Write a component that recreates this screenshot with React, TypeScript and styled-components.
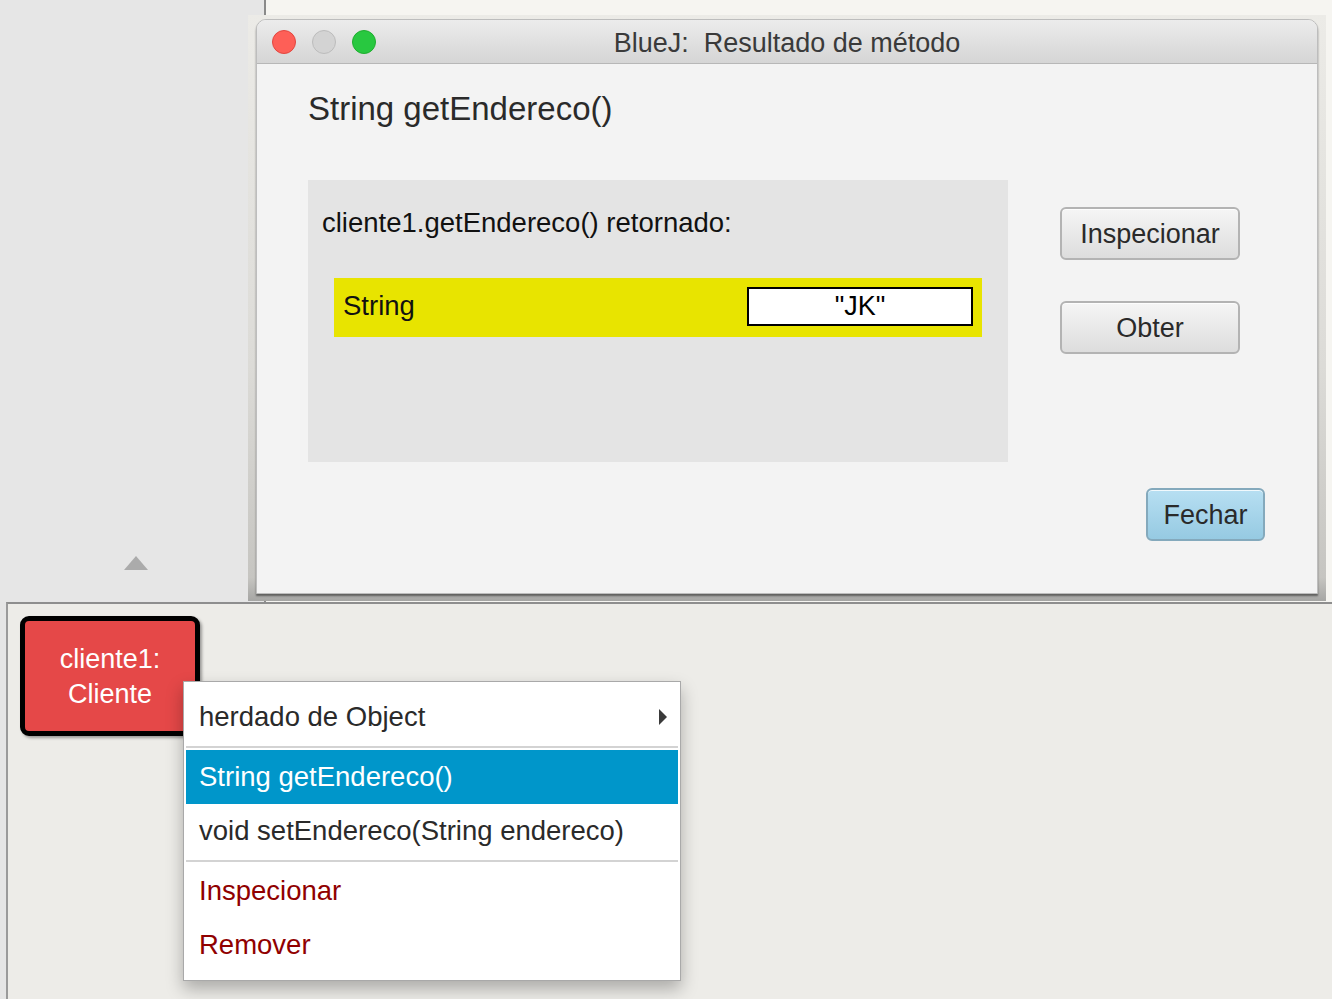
import React from "react";
import styled, { createGlobalStyle } from "styled-components";

const GlobalStyle = createGlobalStyle`
  html, body {
    margin: 0;
    padding: 0;
    width: 1332px;
    height: 999px;
    overflow: hidden;
    font-family: "Liberation Sans", Arial, sans-serif;
  }
  * { box-sizing: border-box; }
`;

const Screen = styled.div`
  position: relative;
  width: 1332px;
  height: 999px;
  display: flex;
  flex-direction: column;
  background: #e5e5e5;
  overflow: hidden;
`;

const TopArea = styled.div`
  display: flex;
  height: 602px;
  flex-shrink: 0;
`;

const SidePane = styled.div`
  width: 264px;
  background: #e6e6e6;
  display: flex;
  flex-direction: column;
  justify-content: flex-end;
  padding: 0 0 32px 124px;
`;

const UpTriangle = styled.div`
  width: 0;
  height: 0;
  border-left: 12px solid transparent;
  border-right: 12px solid transparent;
  border-bottom: 14px solid #ababab;
`;

const Splitter = styled.div`
  width: 2px;
  background: #8a8a8a;
`;

const DesktopPane = styled.div`
  flex: 1;
  background: #f6f5f1;
`;

const Bench = styled.div`
  flex: 1;
  margin-left: 6px;
  border-top: 2px solid #8e8e8e;
  border-left: 2px solid #9a9a9a;
  background: #edece8;
  padding: 12px;
`;

const ObjectCard = styled.div`
  width: 180px;
  height: 120px;
  border: 5px solid #000;
  border-radius: 9px;
  background: #e54848;
  color: #fff;
  font-size: 27px;
  line-height: 35px;
  padding-top: 2px;
  display: flex;
  flex-direction: column;
  align-items: center;
  justify-content: center;
  box-shadow: 2px 2px 3px rgba(0, 0, 0, 0.35);
`;

/* Dialog window (floats over the desktop) */
const DialogFrame = styled.div`
  position: absolute;
  left: 248px;
  top: 15px;
  width: 1078px;
  height: 586px;
  padding: 4px 8px 7px 8px;
  background: linear-gradient(to bottom, #ecebe7 0%, #dcdbd7 60%, #c6c5c1 96%, #a6a6a4 100%);
`;

const Window = styled.div`
  width: 100%;
  height: 100%;
  display: flex;
  flex-direction: column;
  background: #f3f3f3;
  border: 1px solid #bdbdbd;
  border-radius: 10px 10px 0 0;
  overflow: hidden;
  box-shadow: 0 2px 2px rgba(0, 0, 0, 0.45);
`;

const TitleBar = styled.div`
  height: 44px;
  flex-shrink: 0;
  display: grid;
  grid-template-columns: 1fr auto 1fr;
  align-items: center;
  background: linear-gradient(to bottom, #ececec, #d5d5d5);
  border-bottom: 1px solid #b7b7b7;
`;

const Lights = styled.div`
  display: flex;
  gap: 16px;
  padding-left: 15px;
`;

const Light = styled.div<{ $color: string; $edge: string }>`
  width: 24px;
  height: 24px;
  border-radius: 50%;
  background: ${(p) => p.$color};
  border: 1px solid ${(p) => p.$edge};
`;

const Title = styled.div`
  font-size: 27px;
  color: #3a3a3a;
  white-space: pre;
  padding-top: 3px;
`;

const Body = styled.div`
  flex: 1;
  display: flex;
  flex-direction: column;
  padding: 25px 52px 0 51px;
`;

const Heading = styled.div`
  font-size: 33px;
  line-height: 40px;
  color: #2a2a2a;
`;

const ContentRow = styled.div`
  display: flex;
  align-items: flex-start;
  margin-top: 51px;
`;

const ResultPanel = styled.div`
  width: 700px;
  height: 282px;
  background: #e4e4e4;
  padding: 26px 26px 0 14px;
  display: flex;
  flex-direction: column;
`;

const ResultLabel = styled.div`
  font-size: 27.5px;
  line-height: 34px;
  color: #111;
`;

const ValueRow = styled.div`
  margin-top: 38px;
  margin-left: 12px;
  width: 648px;
  height: 59px;
  background: #e8e400;
  display: flex;
  align-items: center;
  justify-content: space-between;
  padding: 0 9px 3px 9px;
  font-size: 27.5px;
  color: #111;
`;

const ValueBox = styled.div`
  width: 226px;
  height: 39px;
  border: 2px solid #000;
  background: #fff;
  display: flex;
  align-items: center;
  justify-content: center;
  font-size: 27px;
  color: #000;
`;

const ButtonColumn = styled.div`
  display: flex;
  flex-direction: column;
  gap: 41px;
  margin-left: 52px;
  padding-top: 27px;
`;

const DialogButton = styled.button<{ $primary?: boolean; $width: number }>`
  width: ${(p) => p.$width}px;
  height: 53px;
  border-radius: 6px;
  border: 2px solid ${(p) => (p.$primary ? "#84a9bc" : "#b3b3b3")};
  background: ${(p) =>
    p.$primary
      ? "linear-gradient(to bottom, #b7dff2, #96cae2)"
      : "linear-gradient(to bottom, #f5f5f5, #dddddd)"};
  box-shadow: inset 0 1px 0 rgba(255, 255, 255, 0.8);
  font-family: "Liberation Sans", Arial, sans-serif;
  font-size: 27px;
  color: #2a2a2a;
  padding: 1px 0 0 0;
  display: flex;
  align-items: center;
  justify-content: center;
`;

const Footer = styled.div`
  display: flex;
  justify-content: flex-end;
  margin-top: 26px;
`;

/* Context menu (pops over the object bench) */
const Menu = styled.div`
  position: absolute;
  left: 183px;
  top: 681px;
  width: 498px;
  height: 300px;
  background: #fff;
  border: 1px solid #a9a9a9;
  padding: 8px 2px;
  display: flex;
  flex-direction: column;
  box-shadow: 0 8px 16px rgba(0, 0, 0, 0.28);
`;

const MenuItem = styled.div<{ $active?: boolean; $danger?: boolean }>`
  height: 54px;
  flex-shrink: 0;
  display: flex;
  align-items: center;
  justify-content: space-between;
  padding: 0 11px 0 13px;
  font-size: 27.5px;
  background: ${(p) => (p.$active ? "#0096ca" : "transparent")};
  color: ${(p) => (p.$active ? "#fff" : p.$danger ? "#900000" : "#2a2a2a")};
`;

const MenuSeparator = styled.div`
  height: 2px;
  margin: 2px 0;
  background: #d3d3d3;
  flex-shrink: 0;
`;

const SubmenuArrow = () => (
  <svg width="8" height="16" viewBox="0 0 8 16">
    <polygon points="0,0 8,8 0,16" fill="#3a3a3a" />
  </svg>
);

export default function App() {
  return (
    <>
      <GlobalStyle />
      <Screen>
        <TopArea>
          <SidePane>
            <UpTriangle />
          </SidePane>
          <Splitter />
          <DesktopPane />
        </TopArea>
        <Bench>
          <ObjectCard>
            <span>cliente1:</span>
            <span>Cliente</span>
          </ObjectCard>
        </Bench>

        <DialogFrame>
          <Window>
            <TitleBar>
              <Lights>
                <Light $color="#fe5f57" $edge="#e2463f" />
                <Light $color="#d3d3d3" $edge="#bcbcbc" />
                <Light $color="#28c840" $edge="#1fae2f" />
              </Lights>
              <Title>BlueJ:  Resultado de método</Title>
              <div />
            </TitleBar>
            <Body>
              <Heading>String getEndereco()</Heading>
              <ContentRow>
                <ResultPanel>
                  <ResultLabel>cliente1.getEndereco() retornado:</ResultLabel>
                  <ValueRow>
                    <span>String</span>
                    <ValueBox>"JK"</ValueBox>
                  </ValueRow>
                </ResultPanel>
                <ButtonColumn>
                  <DialogButton $width={180}>Inspecionar</DialogButton>
                  <DialogButton $width={180}>Obter</DialogButton>
                </ButtonColumn>
              </ContentRow>
              <Footer>
                <DialogButton $primary $width={119}>Fechar</DialogButton>
              </Footer>
            </Body>
          </Window>
        </DialogFrame>

        <Menu>
          <MenuItem>
            <span>herdado de Object</span>
            <SubmenuArrow />
          </MenuItem>
          <MenuSeparator />
          <MenuItem $active>String getEndereco()</MenuItem>
          <MenuItem>void setEndereco(String endereco)</MenuItem>
          <MenuSeparator />
          <MenuItem $danger>Inspecionar</MenuItem>
          <MenuItem $danger>Remover</MenuItem>
        </Menu>
      </Screen>
    </>
  );
}
